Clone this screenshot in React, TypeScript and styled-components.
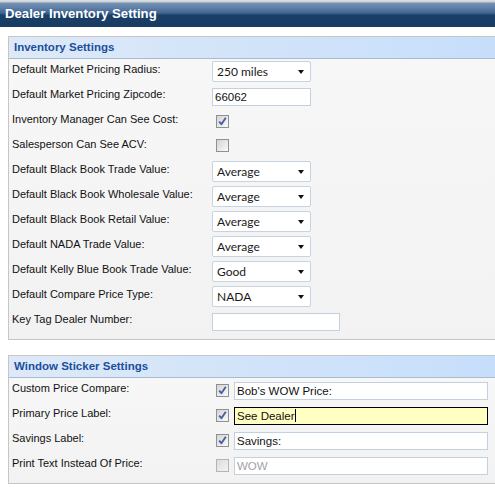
import React from "react";
import styled, { createGlobalStyle } from "styled-components";

const GlobalStyle = createGlobalStyle`
  html, body { margin: 0; padding: 0; background: #ffffff; overflow: hidden; }
  body { font-family: "Liberation Sans", Arial, sans-serif; }
  * { box-sizing: border-box; }
`;

const Page = styled.div`
  width: 495px;
  height: 487px;
  overflow: hidden;
  background: #ffffff;
`;

const TitleBar = styled.div`
  height: 27px;
  display: flex;
  align-items: center;
  padding-left: 5px;
  color: #ffffff;
  font-weight: bold;
  font-size: 13.2px;
  background: linear-gradient(
    to bottom,
    #dcdfdc 0px,
    #c9d0d6 2px,
    #7592b5 3px,
    #5d7ea6 8px,
    #3f6591 13px,
    #1b4068 15px,
    #173b61 27px
  );
`;

const Content = styled.div`
  display: flex;
  flex-direction: column;
  gap: 15px;
  padding: 9px 0 0 8px;
`;

const Panel = styled.section`
  width: 500px;
  border: 1px solid #c6c6c6;
`;

const PanelHeader = styled.h2`
  margin: 0;
  height: 22px;
  display: flex;
  align-items: center;
  padding-left: 5px;
  padding-bottom: 1px;
  font-size: 11.5px;
  font-weight: bold;
  color: #1b4f9c;
  background: linear-gradient(to right, #dde9f8, #c6defb);
  border-bottom: 1px solid #a9bbd0;
`;

const PanelBody = styled.div<{ $bottom: number }>`
  background: linear-gradient(to bottom, #f7f7f7, #f2f2f2);
  padding: 0 0 ${(p) => p.$bottom}px 3px;
`;

const Row = styled.div`
  display: grid;
  grid-template-columns: 200px auto;
  align-items: center;
  height: 25px;
`;

const Label = styled.span`
  font-size: 11px;
  color: #111111;
  padding-bottom: 6px;
`;

const SelectBox = styled.div`
  position: relative;
  width: 99px;
  height: 21px;
  border: 1px solid #c6d3e0;
  border-radius: 2px;
  background: #ffffff;
  display: flex;
  align-items: center;
  padding-left: 4px;
  font-family: Lato, "Open Sans", sans-serif;
  font-size: 12px;
  color: #1a1a1a;
  &::after {
    content: "";
    position: absolute;
    right: 6px;
    top: 8px;
    border-left: 3.5px solid transparent;
    border-right: 3.5px solid transparent;
    border-top: 4px solid #111111;
  }
`;

const TextInput = styled.input<{ $w: number; $muted?: boolean }>`
  width: ${(p) => p.$w}px;
  height: 18px;
  margin: 0;
  padding: 0 2px;
  border: 1px solid #c3d1df;
  background: #ffffff;
  font-family: "Liberation Sans", Arial, sans-serif;
  font-size: 11.5px;
  color: ${(p) => (p.$muted ? "#a3a3a3" : "#111111")};
  outline: none;
`;

const FocusField = styled.div<{ $w: number }>`
  width: ${(p) => p.$w}px;
  height: 18px;
  padding: 0 2px;
  border: 1px solid #000000;
  background: #ffffc4;
  display: flex;
  align-items: center;
  font-size: 11.5px;
  color: #111111;
`;

const Caret = styled.span`
  display: inline-block;
  width: 1px;
  height: 13px;
  background: #000000;
`;

const Box = styled.span<{ $disabled?: boolean }>`
  width: 13px;
  height: 13px;
  display: inline-flex;
  align-items: center;
  justify-content: center;
  border: 1px solid ${(p) => (p.$disabled ? "#b5b5b5" : "#8f9092")};
  background: ${(p) =>
    p.$disabled
      ? "linear-gradient(135deg, #dcdcdc, #f4f4f4)"
      : "linear-gradient(135deg, #d4d4d4, #fafafa)"};
  margin-left: 4px;
`;

const CheckCell = styled.div`
  display: flex;
  align-items: center;
  gap: 5px;
`;

function Check({ checked, disabled }: { checked?: boolean; disabled?: boolean }) {
  return (
    <Box $disabled={disabled}>
      {checked && (
        <svg width="11" height="11" viewBox="0 0 11 11">
          <path
            d="M2.2 5.6 L4.4 8.2 L8.8 1.8"
            fill="none"
            stroke="#4b5f9e"
            strokeWidth="1.9"
            strokeLinejoin="round"
          />
        </svg>
      )}
    </Box>
  );
}

const inventoryRows: { label: string; kind: "select" | "text" | "check"; value?: string; checked?: boolean; w?: number }[] = [
  { label: "Default Market Pricing Radius:", kind: "select", value: "250 miles" },
  { label: "Default Market Pricing Zipcode:", kind: "text", value: "66062", w: 99 },
  { label: "Inventory Manager Can See Cost:", kind: "check", checked: true },
  { label: "Salesperson Can See ACV:", kind: "check", checked: false },
  { label: "Default Black Book Trade Value:", kind: "select", value: "Average" },
  { label: "Default Black Book Wholesale Value:", kind: "select", value: "Average" },
  { label: "Default Black Book Retail Value:", kind: "select", value: "Average" },
  { label: "Default NADA Trade Value:", kind: "select", value: "Average" },
  { label: "Default Kelly Blue Book Trade Value:", kind: "select", value: "Good" },
  { label: "Default Compare Price Type:", kind: "select", value: "NADA" },
  { label: "Key Tag Dealer Number:", kind: "text", value: "", w: 128 },
];

const stickerRows: { label: string; value: string; checked: boolean; focus?: boolean; disabled?: boolean }[] = [
  { label: "Custom Price Compare:", value: "Bob's WOW Price:", checked: true },
  { label: "Primary Price Label:", value: "See Dealer", checked: true, focus: true },
  { label: "Savings Label:", value: "Savings:", checked: true },
  { label: "Print Text Instead Of Price:", value: "WOW", checked: false, disabled: true },
];

export default function App() {
  return (
    <Page>
      <GlobalStyle />
      <TitleBar>Dealer Inventory Setting</TitleBar>
      <Content>
        <Panel>
          <PanelHeader>Inventory Settings</PanelHeader>
          <PanelBody $bottom={5}>
            {inventoryRows.map((r) => (
              <Row key={r.label}>
                <Label>{r.label}</Label>
                <div>
                  {r.kind === "select" && <SelectBox>{r.value}</SelectBox>}
                  {r.kind === "text" && <TextInput $w={r.w ?? 99} readOnly value={r.value} />}
                  {r.kind === "check" && <Check checked={r.checked} />}
                </div>
              </Row>
            ))}
          </PanelBody>
        </Panel>
        <Panel>
          <PanelHeader>Window Sticker Settings</PanelHeader>
          <PanelBody $bottom={5}>
            {stickerRows.map((r) => (
              <Row key={r.label}>
                <Label>{r.label}</Label>
                <CheckCell>
                  <Check checked={r.checked} disabled={r.disabled} />
                  {r.focus ? (
                    <FocusField $w={254}>
                      {r.value}
                      <Caret />
                    </FocusField>
                  ) : (
                    <TextInput $w={254} $muted={r.disabled} readOnly value={r.value} />
                  )}
                </CheckCell>
              </Row>
            ))}
          </PanelBody>
        </Panel>
      </Content>
    </Page>
  );
}
